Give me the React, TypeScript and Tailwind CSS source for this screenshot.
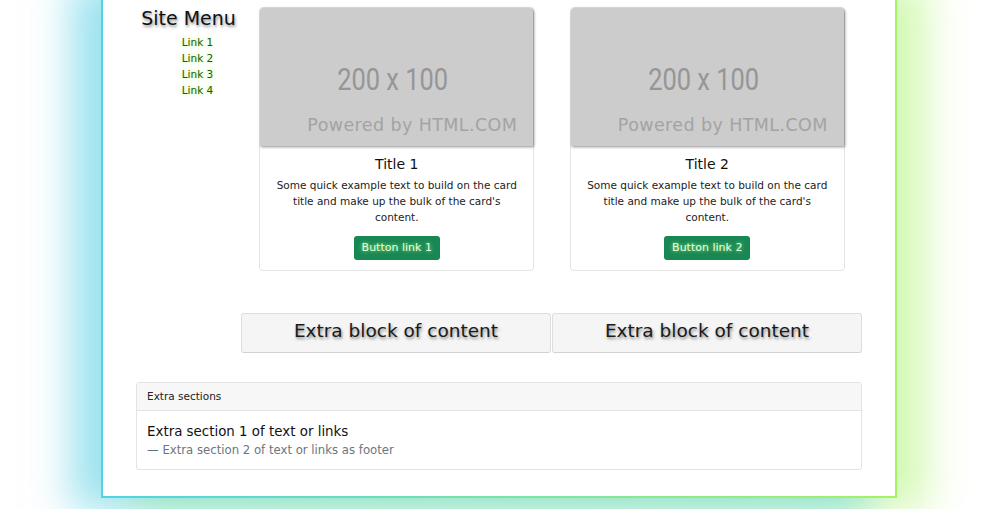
const links = ["Link 1", "Link 2", "Link 3", "Link 4"];

const Placeholder = () => (
  <div className="relative h-[138px] rounded-t-[4px] bg-[#cccccc] shadow-[1px_1px_3px_rgba(0,0,0,0.45)]">
    <div className="absolute left-0 right-0 top-[50px] flex justify-center">
      <span className="inline-block -translate-x-[4px] scale-x-[0.82] font-['Roboto','Liberation_Sans',sans-serif] text-[31px] leading-[44px] text-[#969696]">
        200 x 100
      </span>
    </div>
    <div className="absolute right-[16px] top-[105px] text-[17.5px] leading-[24px] tracking-[0.4px] text-[#a3a3a3]">
      Powered by HTML.COM
    </div>
  </div>
);

const Card = ({ n }: { n: number }) => (
  <div className="flex w-[275px] flex-col rounded-[4px] border border-[#e3e3e3] bg-white">
    <Placeholder />
    <div className="flex flex-col items-center px-3 pb-[10px] pt-[8px] text-center">
      <h5 className="text-[14px] leading-[20px] text-[#111]">Title {n}</h5>
      <p className="mt-[3px] text-[10.5px] leading-[16px] text-[#222]">
        Some quick example text to build on the card title and make up the bulk of the card's content.
      </p>
      <a className="mt-[11px] rounded-[3px] bg-[#198754] px-[8px] py-[4px] text-[11px] leading-[16px] text-[#eaffe0] [text-shadow:0_0_4px_#9dff7a]">
        Button link {n}
      </a>
    </div>
  </div>
);

const ExtraBlock = () => (
  <div className="flex h-[40px] flex-1 items-center justify-center rounded-[3px] border border-[#dedede] border-b-[#d2d2d2] bg-[#f5f5f5] pb-[4px] text-[18.5px] leading-[24px] text-[#1a1a1a] [text-shadow:1px_2px_3px_rgba(0,0,0,0.45)]">
    Extra block of content
  </div>
);

export default function App() {
  return (
    <div className="h-[509px] overflow-hidden bg-white font-['DejaVu_Sans','Verdana',sans-serif]">
      <div className="ml-[101px] -mt-[30px] w-[796px] border-[2px] border-t-0 bg-white pt-[37px] [border-image:linear-gradient(to_right,#4fd3e6,#a5f266)_1] shadow-[-30px_12px_38px_rgba(60,200,225,0.5),30px_12px_38px_rgba(165,245,90,0.45)]">
        <div className="mx-[33px] flex flex-col">
          <div className="flex">
            <div className="flex w-[105px] flex-col items-center">
              <h2 className="text-[19px] leading-[22px] text-[#111] [text-shadow:1px_2px_3px_rgba(0,0,0,0.45)]">Site Menu</h2>
              <ul className="mt-[5px] flex flex-col items-center pl-[18px]">
                {links.map((l) => (
                  <li key={l} className="text-[10.5px] leading-[16px]">
                    <a className="text-[#1d5a00] [text-shadow:0_0_4px_#a6ff70]">{l}</a>
                  </li>
                ))}
              </ul>
            </div>
            <div className="flex flex-1">
              <div className="flex flex-1 justify-center pl-[1px]">
                <Card n={1} />
              </div>
              <div className="flex flex-1 justify-center pl-[1px]">
                <Card n={2} />
              </div>
            </div>
          </div>

          <div className="ml-[105px] mt-[42px] flex gap-[1px]">
            <ExtraBlock />
            <ExtraBlock />
          </div>

          <div className="mt-[29px] mb-[26px] rounded-[3px] border border-[#e3e3e3]">
            <div className="h-[28px] border-b border-[#e3e3e3] bg-[#f7f7f7] px-[10px] text-[10.5px] leading-[27px] text-[#222]">
              Extra sections
            </div>
            <div className="px-[10px] pb-[10px] pt-[12px]">
              <p className="text-[13.4px] leading-[18px] text-[#111]">Extra section 1 of text or links</p>
              <p className="text-[11.7px] leading-[18px] text-[#6c757d]">— Extra section 2 of text or links as footer</p>
            </div>
          </div>
        </div>
      </div>
    </div>
  );
}
